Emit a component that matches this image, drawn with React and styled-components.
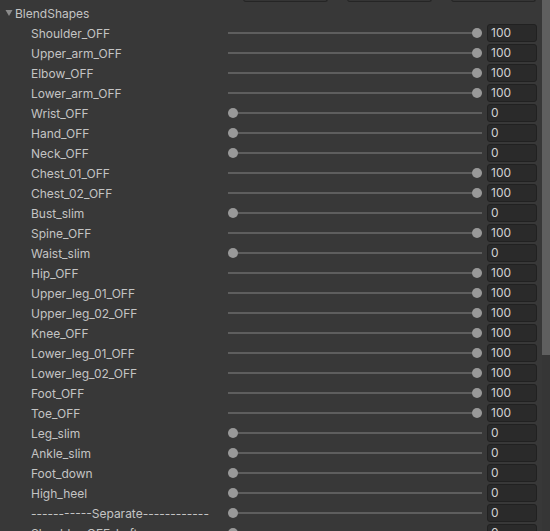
import React from "react";
import styled, { createGlobalStyle } from "styled-components";

const Global = createGlobalStyle`
  html, body { margin: 0; padding: 0; background: #383838; overflow: hidden; }
  body { font-family: Inter, "Noto Sans", "Liberation Sans", sans-serif; }
`;

const rows = [
  ["Shoulder_OFF", 100],
  ["Upper_arm_OFF", 100],
  ["Elbow_OFF", 100],
  ["Lower_arm_OFF", 100],
  ["Wrist_OFF", 0],
  ["Hand_OFF", 0],
  ["Neck_OFF", 0],
  ["Chest_01_OFF", 100],
  ["Chest_02_OFF", 100],
  ["Bust_slim", 0],
  ["Spine_OFF", 100],
  ["Waist_slim", 0],
  ["Hip_OFF", 100],
  ["Upper_leg_01_OFF", 100],
  ["Upper_leg_02_OFF", 100],
  ["Knee_OFF", 100],
  ["Lower_leg_01_OFF", 100],
  ["Lower_leg_02_OFF", 100],
  ["Foot_OFF", 100],
  ["Toe_OFF", 100],
  ["Leg_slim", 0],
  ["Ankle_slim", 0],
  ["Foot_down", 0],
  ["High_heel", 0],
  ["-----------Separate------------", 0],
  ["Shoulder_OFF_Left", 0],
];

const Page = styled.div`
  display: flex;
  width: 550px;
  height: 531px;
  overflow: hidden;
  background: #383838;
`;

const Content = styled.div`
  flex: 1;
  display: flex;
  flex-direction: column;
`;

const Toolbar = styled.div`
  height: 3px;
  flex: none;
  display: flex;
  overflow: hidden;
  padding-left: 243px;
  gap: 19px;
`;

const ToolButton = styled.div`
  width: ${(p) => p.$w}px;
  height: 3px;
  margin-top: -1px;
  box-sizing: border-box;
  background: #353535;
  border: 1px solid #252525;
  border-top: none;
  border-radius: 0 0 3px 3px;
`;

const Header = styled.div`
  height: 20px;
  flex: none;
  display: flex;
  align-items: center;
  padding-left: 5px;
  gap: 2px;
  color: #c4c4c4;
  font-size: 12px;
`;

const Row = styled.div`
  height: 20px;
  flex: none;
  display: grid;
  grid-template-columns: 192px 254px 50px;
  column-gap: 5px;
  align-items: center;
  padding-left: 31px;
`;

const Label = styled.div`
  color: #c4c4c4;
  font-size: 12px;
  white-space: nowrap;
  overflow: hidden;
`;

const Slider = styled.div`
  position: relative;
  height: 10px;
  &::before {
    content: "";
    position: absolute;
    left: 0;
    right: 0;
    top: 4px;
    height: 2px;
    background: #5e5e5e;
  }
`;

const Thumb = styled.div`
  position: absolute;
  top: 0;
  width: 10px;
  height: 10px;
  border-radius: 50%;
  background: #999999;
`;

const Field = styled.div`
  box-sizing: border-box;
  height: 18px;
  border: 1px solid #212121;
  border-radius: 3px;
  background: #2a2a2a;
  color: #d2d2d2;
  font-size: 12px;
  line-height: 16px;
  padding-left: 3px;
`;

const Scrollbar = styled.div`
  width: 10px;
  flex: none;
  display: flex;
  flex-direction: column;
  background: #383838;
`;

const ScrollThumb = styled.div`
  height: 355px;
  margin-left: 2px;
  background: #5f5f5f;
`;

const ScrollTrack = styled.div`
  flex: 1;
  margin-left: 2px;
  background: #363636;
`;

function Foldout() {
  return (
    <svg width="8" height="8" viewBox="0 0 8 8">
      <path d="M0.5 1 L7.5 1 L4 7 Z" fill="#8a8a8a" />
    </svg>
  );
}

export default function App() {
  return (
    <Page>
      <Global />
      <Content>
        <Toolbar>
          <ToolButton $w={85} />
          <ToolButton $w={85} />
          <ToolButton $w={85} />
        </Toolbar>
        <Header>
          <Foldout />
          <span>BlendShapes</span>
        </Header>
        {rows.map(([name, v], i) => (
          <Row key={i}>
            <Label>{name}</Label>
            <Slider>
              <Thumb style={{ left: `${(v / 100) * 244}px` }} />
            </Slider>
            <Field>{v}</Field>
          </Row>
        ))}
      </Content>
      <Scrollbar>
        <ScrollThumb />
        <ScrollTrack />
      </Scrollbar>
    </Page>
  );
}
